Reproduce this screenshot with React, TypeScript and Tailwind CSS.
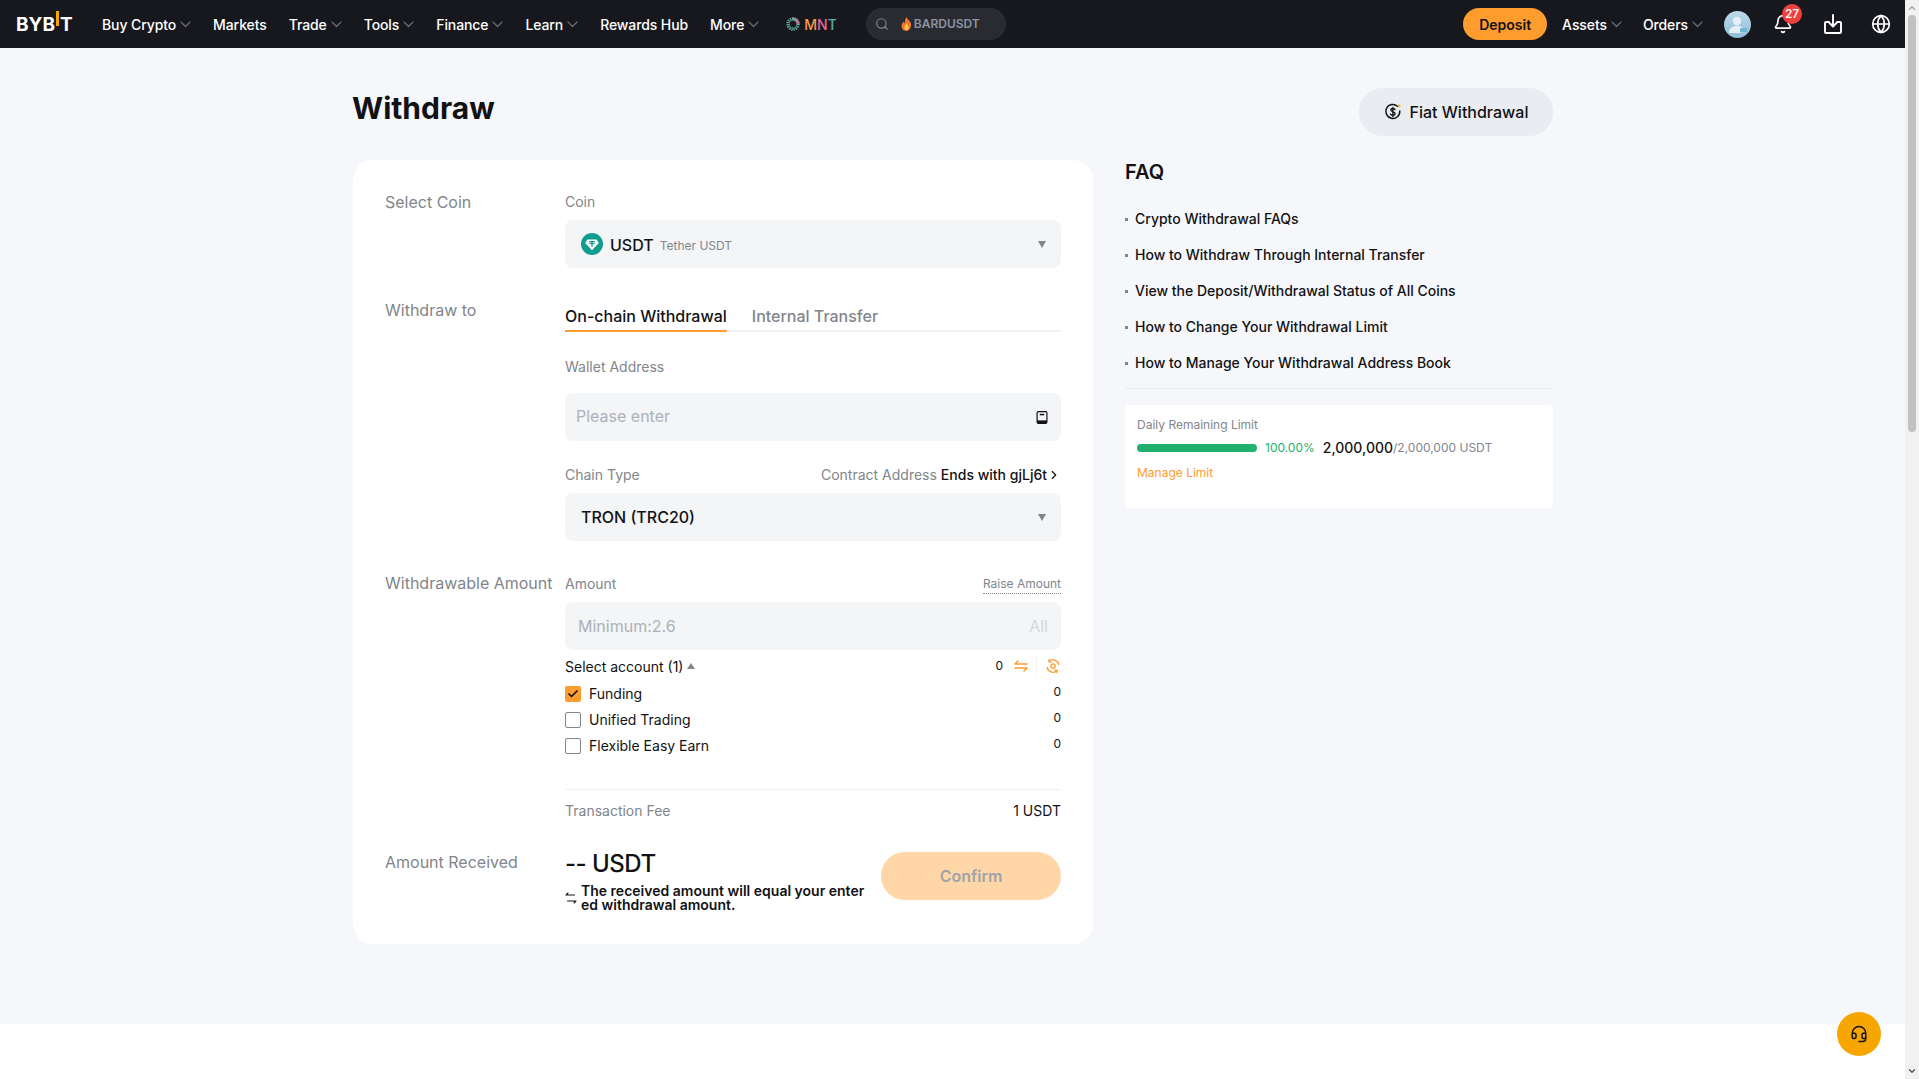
import { ChevronRight, Globe, Search, Bell, Headset, Check, ChevronUp, ChevronDown } from "lucide-react";

const navItems = [
  { label: "Buy Crypto", chevron: true },
  { label: "Markets", chevron: false },
  { label: "Trade", chevron: true },
  { label: "Tools", chevron: true },
  { label: "Finance", chevron: true },
  { label: "Learn", chevron: true },
  { label: "Rewards Hub", chevron: false },
  { label: "More", chevron: true },
];

const faqs = [
  "Crypto Withdrawal FAQs",
  "How to Withdraw Through Internal Transfer",
  "View the Deposit/Withdrawal Status of All Coins",
  "How to Change Your Withdrawal Limit",
  "How to Manage Your Withdrawal Address Book",
];

const accounts = [
  { name: "Funding", checked: true },
  { name: "Unified Trading", checked: false },
  { name: "Flexible Easy Earn", checked: false },
];

function NavChevron() {
  return (
    <svg width="11" height="7" viewBox="0 0 11 7" fill="none" stroke="#6b6e75" strokeWidth="1.200" strokeLinecap="round" strokeLinejoin="round">
      <path d="M1 1l4.500 4.500L10 1" />
    </svg>
  );
}

function NavLink({ label, chevron }: { label: string; chevron?: boolean }) {
  return (
    <div className="flex items-center gap-1 text-[14px] font-medium tracking-[-0.1px] text-white">
      <span>{label}</span>
      {chevron && <NavChevron />}
    </div>
  );
}

function Caret() {
  return <div className="w-0 h-0 border-x-[4px] border-x-transparent border-t-[7px] border-t-[#81858c]" />;
}

function MntIcon() {
  return (
    <svg width="14" height="14" viewBox="0 0 14 14" fill="none">
      <circle cx="7" cy="7" r="5" stroke="#5fb3a6" strokeWidth="3.400" strokeDasharray="1.200 0.800" />
      <path d="M7 2a5 5 0 0 1 5 5" stroke="#e0699a" strokeWidth="3.400" strokeDasharray="1.200 0.800" />
    </svg>
  );
}

function Flame() {
  return (
    <svg width="11" height="14" viewBox="0 0 10 13">
      <path d="M5 0c.6 2 3 3.300 4 5.600C10 8.800 8 13 5 13S0 10.500.5 7.500C.8 6 1.700 5 2.300 4.200c.3 1 .7 1.500 1.200 1.700C3.300 4 3.800 1.500 5 0z" fill="#f0762b" />
      <path d="M5 6c.6 1 2 2 2 3.800C7 11.300 6 12.300 5 12.300S3 11.300 3 9.800C3 8.300 4.500 7.500 5 6z" fill="#ffc24a" />
    </svg>
  );
}

function Avatar() {
  return (
    <div className="w-[27px] h-[27px] rounded-full bg-gradient-to-b from-[#bcd9ea] to-[#8fbfd9] overflow-hidden relative">
      <svg width="27" height="27" viewBox="0 0 27 27">
        <circle cx="13" cy="10" r="4.200" fill="#e6f0f6" />
        <path d="M5 22c0-5 3.500-7 8-7s8 2 8 7z" fill="#e6f0f6" />
        <rect x="16" y="17" width="7" height="4.500" rx="1" fill="#6fb6d3" />
      </svg>
    </div>
  );
}

function DownloadIcon() {
  return (
    <svg width="18" height="20" viewBox="0 0 18 20" fill="none" stroke="white" strokeWidth="1.900" strokeLinecap="round" strokeLinejoin="round">
      <path d="M5 8H2a1 1 0 0 0-1 1v9a1 1 0 0 0 1 1h14a1 1 0 0 0 1-1V9a1 1 0 0 0-1-1h-3" />
      <path d="M9 1v11M5.500 9 9 12.500 12.500 9" />
    </svg>
  );
}

function FiatIcon() {
  return (
    <svg width="18" height="18" viewBox="0 0 18 18" fill="none">
      <path d="M13.500 3.200A7 7 0 1 0 15.800 8" stroke="#121214" strokeWidth="1.500" strokeLinecap="round" />
      <path d="M11 6.600C10.500 5.800 9.700 5.500 8.800 5.500c-1.100 0-2 .6-2 1.600 0 2.200 4.300 1.200 4.300 3.500 0 1-1 1.700-2.200 1.700-1 0-1.900-.4-2.400-1.200M8.900 4.300v9.200" stroke="#121214" strokeWidth="1.300" strokeLinecap="round" />
      <path d="M15 0.500l.6 1.700 1.700.6-1.700.6-.6 1.700-.6-1.700-1.700-.6 1.700-.6z" fill="#f7a600" />
    </svg>
  );
}

function UsdtIcon() {
  return (
    <svg width="22" height="22" viewBox="0 0 22 22">
      <circle cx="11" cy="11" r="11" fill="#0f9d8f" />
      <path d="M6.500 6.500h9l2.300 3.500L11 17.200 4.200 10z" fill="white" />
      <path d="M8 8h6v1.200h-2.300v.8c1.300.1 2.400.3 2.400.6s-1.100.5-2.400.6v2.600h-1.400v-2.600c-1.300-.1-2.400-.3-2.400-.6s1.100-.5 2.400-.6v-.8H8z" fill="#0f9d8f" />
    </svg>
  );
}

function BookIcon() {
  return (
    <svg width="12" height="13" viewBox="0 0 12 13" fill="none" stroke="#121214" strokeWidth="1.200">
      <rect x="1.100" y="0.700" width="9.800" height="11.600" rx="1.200" />
      <rect x="3.800" y="2.800" width="4.400" height="1.500" fill="#121214" stroke="none" />
      <rect x="1.100" y="9.400" width="9.800" height="2.900" fill="#121214" stroke="none" />
    </svg>
  );
}

function SwapIcon() {
  return (
    <svg width="14" height="12" viewBox="0 0 14 12" fill="none" stroke="#ff9c2e" strokeWidth="1.500" strokeLinecap="round" strokeLinejoin="round">
      <path d="M13 4H1l3-3M1 8h12l-3 3" />
    </svg>
  );
}

function RefreshIcon() {
  return (
    <svg width="14" height="14" viewBox="0 0 14 14" fill="none" stroke="#ff9c2e" strokeWidth="1.300" strokeLinecap="round" strokeLinejoin="round">
      <path d="M3 2.200A6 6 0 0 1 12.800 5.500M11 11.800A6 6 0 0 1 1.200 8.500" />
      <path d="M3.300 0.500 2.900 2.600 5 3M10.700 13.500l.4-2.100L9 11" />
      <circle cx="7" cy="7" r="2.200" />
    </svg>
  );
}

function NoteArrows() {
  return (
    <svg width="12" height="12" viewBox="0 0 12 12" fill="none" stroke="#121214" strokeWidth="1.100" strokeLinecap="round" strokeLinejoin="round">
      <path d="M9.500 3H1l2-2M2.500 9H11l-2 2" />
    </svg>
  );
}

function Header() {
  return (
    <header className="h-12 shrink-0 bg-[#17181e] flex items-center justify-between pl-4 pr-[14px]">
      <div className="flex items-center">
        <div className="w-[56px] mr-[30px] flex items-start h-[20px] text-[19px] leading-[22px] font-bold text-white whitespace-nowrap">
          <span>BYB</span>
          <span className="w-[3px] h-[15px] bg-[#f7a600] -mt-[3px] mx-px shrink-0" />
          <span>T</span>
        </div>
        <nav className="flex items-center gap-[22px]">
          {navItems.map(item => (
            <NavLink key={item.label} label={item.label} chevron={item.chevron} />
          ))}
        </nav>
        <div className="flex items-center gap-1 ml-[27px] text-[14px] font-medium">
          <MntIcon />
          <span>
            <span className="text-[#f79c4a]">M</span>
            <span className="text-[#e2699a]">N</span>
            <span className="text-[#4fb3a6]">T</span>
          </span>
        </div>
        <div className="ml-[29px] w-[140px] h-8 rounded-full bg-[#2a2b31] flex items-center pl-[9px] gap-3">
          <Search size={14} className="text-[#81858c]" />
          <div className="flex items-center gap-[2px] text-[12px] font-semibold text-[#8d95a3]">
            <Flame />
            <span>BARDUSDT</span>
          </div>
        </div>
      </div>
      <div className="flex items-center">
        <button className="w-[84px] h-8 rounded-full bg-[#ff9c2e] text-[14px] font-semibold text-[#121214]">Deposit</button>
        <div className="flex items-center gap-[21px] ml-[15px]">
          <NavLink label="Assets" chevron />
          <NavLink label="Orders" chevron />
        </div>
        <div className="ml-[21px] mr-[22px]"><Avatar /></div>
        <div className="relative mr-[31px]">
          <Bell size={20} className="text-white" />
          <span className="absolute -top-[10px] -right-[9px] w-5 h-5 rounded-full bg-[#f0413f] text-white text-[12px] font-medium flex items-center justify-center">27</span>
        </div>
        <div className="mr-[29px]"><DownloadIcon /></div>
        <Globe size={20} className="text-white" />
      </div>
    </header>
  );
}

function FieldBox({ children }: { children: React.ReactNode }) {
  return <div className="h-12 rounded-lg bg-[#f3f5f7] flex items-center justify-between">{children}</div>;
}

function WithdrawCard() {
  return (
    <div className="w-[740px] h-[784px] shrink-0 bg-white rounded-[20px] px-8 pt-8">
      {/* Select Coin */}
      <div className="flex">
        <div className="w-[180px] shrink-0 text-[16px] leading-5 text-[#81858c]">Select Coin</div>
        <div className="flex-1">
          <div className="text-[14px] leading-5 text-[#81858c] mb-2">Coin</div>
          <FieldBox>
            <div className="flex items-center pl-4">
              <UsdtIcon />
              <span className="ml-[7px] mt-px text-[16px] font-medium text-[#121214]">USDT</span>
              <span className="ml-[6px] text-[12px] text-[#81858c] mt-[3px]">Tether USDT</span>
            </div>
            <div className="pr-[15px]"><Caret /></div>
          </FieldBox>
        </div>
      </div>

      {/* Withdraw to */}
      <div className="flex mt-[30px]">
        <div className="w-[180px] shrink-0 text-[16px] leading-6 text-[#81858c]">Withdraw to</div>
        <div className="flex-1">
          <div className="h-[34px] flex gap-[25px] border-b-2 border-[#eff1f4] text-[16px] font-medium">
            <div className="h-[34px] pt-[6px] leading-6 border-b-2 border-[#ff9c2e] text-[#121214]">On-chain Withdrawal</div>
            <div className="pt-[6px] leading-6 text-[#81858c]">Internal Transfer</div>
          </div>
          <div className="mt-[25px] text-[14px] leading-5 text-[#81858c] mb-4">Wallet Address</div>
          <FieldBox>
            <span className="pl-[11px] -mt-[2px] text-[16px] text-[#adb1b8]">Please enter</span>
            <div className="pr-[13px]"><BookIcon /></div>
          </FieldBox>
          <div className="mt-6 mb-2 flex justify-between text-[14px] leading-5 text-[#81858c]">
            <span>Chain Type</span>
            <span className="flex items-center">
              Contract Address
              <span className="ml-1 font-medium text-[#121214]">Ends with gjLj6t</span>
              <ChevronRight size={14} strokeWidth={2} className="text-[#121214]" />
            </span>
          </div>
          <FieldBox>
            <span className="pl-4 text-[16px] font-medium text-[#121214]">TRON (TRC20)</span>
            <div className="pr-[15px]"><Caret /></div>
          </FieldBox>
        </div>
      </div>

      {/* Withdrawable Amount */}
      <div className="flex mt-[33px]">
        <div className="w-[180px] shrink-0 -mt-px text-[16px] leading-5 text-[#81858c] whitespace-nowrap">Withdrawable Amount</div>
        <div className="flex-1">
          <div className="flex justify-between items-start h-5 mb-2">
            <span className="text-[14px] leading-5 text-[#81858c]">Amount</span>
            <span className="text-[12px] leading-[19px] h-5 text-[#81858c] border-b border-dotted border-[#81858c]">Raise Amount</span>
          </div>
          <FieldBox>
            <span className="pl-[13px] text-[16px] text-[#adb1b8]">Minimum:2.6</span>
            <span className="pr-[13px] text-[16px] text-[#d4d7dc]">All</span>
          </FieldBox>
          <div className="mt-[6px] flex justify-between items-center h-5">
            <div className="flex items-center gap-1 text-[14px] text-[#121214]">
              <span>Select account (1)</span>
              <div className="w-0 h-0 border-x-[4px] border-x-transparent border-b-[6px] border-b-[#81858c]" />
            </div>
            <div className="flex items-center pr-px text-[12px] text-[#121214]">
              <span>0</span>
              <span className="ml-[11px]"><SwapIcon /></span>
              <span className="w-px h-4 bg-[#eff1f4] ml-2 mr-[9px]" />
              <RefreshIcon />
            </div>
          </div>
          <div className="mt-[5px]">
            {accounts.map(a => (
              <div key={a.name} className="h-[26px] flex items-center justify-between">
                <div className="flex items-center gap-2">
                  {a.checked ? (
                    <div className="w-4 h-4 rounded-[2px] bg-[#ff9c2e] flex items-center justify-center">
                      <Check size={12} strokeWidth={3.500} className="text-[#121214]" />
                    </div>
                  ) : (
                    <div className="w-4 h-4 rounded-[2px] border border-[#81858c] bg-white" />
                  )}
                  <span className="text-[14px] leading-5 -mt-px text-[#121214]">{a.name}</span>
                </div>
                <span className="text-[12px] text-[#121214] -mt-1">0</span>
              </div>
            ))}
          </div>
        </div>
      </div>

      {/* Fee */}
      <div className="ml-[180px] mt-[30px] border-t border-[#eff1f4] pt-[11px] flex justify-between text-[14px] leading-5">
        <span className="text-[#81858c]">Transaction Fee</span>
        <span className="text-[#121214]">1 USDT</span>
      </div>

      {/* Amount Received */}
      <div className="flex mt-[26px]">
        <div className="w-[180px] shrink-0 pt-[5px] text-[16px] leading-5 text-[#81858c]">Amount Received</div>
        <div className="flex-1 flex justify-between">
          <div className="w-[300px]">
            <div className="pt-px text-[24px] leading-8 font-medium tracking-[-0.5px] text-[#121214]">-- USDT</div>
            <div className="mt-1 flex items-center gap-1">
              <NoteArrows />
              <div className="w-[284px] text-[14px] leading-[14px] font-semibold text-[#121214] break-all">The received amount will equal your entered withdrawal amount.</div>
            </div>
          </div>
          <button className="w-[180px] h-12 mt-[5px] rounded-full bg-[#ffd6a8] text-[16px] font-semibold text-[#9fa3a8]">Confirm</button>
        </div>
      </div>
    </div>
  );
}

function FaqPanel() {
  return (
    <div className="w-[428px] shrink-0">
      <h2 className="text-[20px] leading-6 font-semibold text-[#121214]">FAQ</h2>
      <ul className="mt-4 flex flex-col">
        {faqs.map(q => (
          <li key={q} className="h-9 flex items-center text-[14px] font-medium text-[#121214]">
            <span className="w-[3px] h-[3px] bg-[#81858c] mr-[7px] mt-[3px]" />
            {q}
          </li>
        ))}
      </ul>
      <div className="mt-2 border-t border-[#e9ecf0]" />
      <div className="mt-4 h-[103px] bg-white rounded-[4px] px-3 pt-[11px]">
        <div className="text-[12px] leading-[18px] text-[#81858c]">Daily Remaining Limit</div>
        <div className="mt-1 flex items-center h-5">
          <div className="w-[120px] h-2 -mt-px rounded-full bg-[#20b26c]" />
          <span className="ml-2 text-[12px] text-[#20b26c]">100.00%</span>
          <span className="ml-2 -mt-[2px] text-[14px] font-medium text-[#121214]">2,000,000</span>
          <span className="text-[12px] text-[#81858c]">/2,000,000 USDT</span>
        </div>
        <div className="mt-[6px] text-[12px] leading-[18px] text-[#ff9c2e]">Manage Limit</div>
      </div>
    </div>
  );
}

function Scrollbar() {
  return (
    <div className="w-[14px] shrink-0 bg-[#f1f1f1] flex flex-col items-center">
      <ChevronUp size={10} strokeWidth={3} className="text-[#a3a3a3] mt-[3px]" />
      <div className="w-2 h-[417px] mt-[2px] rounded-full bg-[#c1c1c1]" />
      <div className="flex-1" />
      <ChevronDown size={10} strokeWidth={3} className="text-[#505050] mb-[3px]" />
    </div>
  );
}

export default function App() {
  return (
    <div className="h-screen flex overflow-hidden bg-white text-[#121214] font-['Inter',sans-serif]">
      <div className="flex-1 min-w-0 flex flex-col relative">
        <Header />
        <main className="h-[976px] shrink-0 bg-[#f5f7fb] pt-10">
          <div className="w-[1200px] ml-[353px]">
            <div className="flex items-center justify-between h-12 mb-6">
              <h1 className="text-[30px] font-bold text-[#121214] -ml-px -mt-[8px]">Withdraw</h1>
              <button className="w-[194px] h-12 rounded-full bg-[#e9ecf0] flex items-center justify-center gap-2 text-[16px] font-medium text-[#121214]">
                <FiatIcon />
                Fiat Withdrawal
              </button>
            </div>
            <div className="flex gap-8">
              <WithdrawCard />
              <FaqPanel />
            </div>
          </div>
        </main>
        <button className="absolute right-[24px] top-[1012px] w-11 h-11 rounded-full bg-[#f7a600] flex items-center justify-center">
          <Headset size={18} className="text-[#121214]" />
        </button>
      </div>
      <Scrollbar />
    </div>
  );
}
